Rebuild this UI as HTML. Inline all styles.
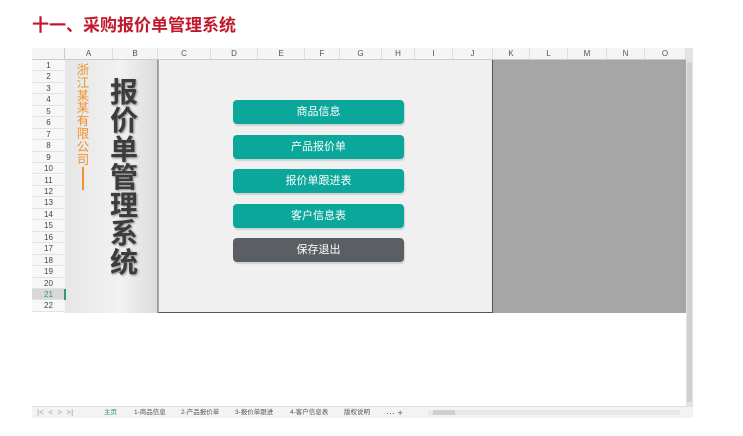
<!DOCTYPE html>
<html><head><meta charset="utf-8"><style>
*{margin:0;padding:0;box-sizing:border-box}
body{width:743px;height:436px;background:#fff;position:relative;overflow:hidden;font-family:"Liberation Sans","Noto Sans CJK SC",sans-serif}
.a{position:absolute}
h1{position:absolute;left:32px;top:11px;font-size:17px;color:#c0182c;font-weight:bold;font-family:"Liberation Sans","Noto Sans CJK SC",sans-serif}
.ch{position:absolute;top:48px;height:12px;font-size:8px;color:#555;text-align:center;line-height:12px;border-right:1px solid #ddd;background:#f5f5f5}
.rh{position:absolute;left:32px;width:33px;height:11.45px;font-size:8px;color:#444;text-align:center;line-height:11px;border-bottom:1px solid #e2e2e2;background:#f7f7f7}
.btn{position:absolute;left:233px;width:171px;height:24px;border-radius:4px;background:#0aa79a;color:#fff;font-size:11px;text-align:center;line-height:24px;box-shadow:1px 2px 1px #c9d6d4}
.tab{position:absolute;top:408px;font-size:6.5px;color:#555;line-height:10px}
</style></head><body>
<h1>十一、采购报价单管理系统</h1>
<div class="a" style="left:32px;top:48px;width:661px;height:370px;background:#fff"></div>
<div class="ch" style="left:32px;width:33px;border-right:1px solid #ccc"></div>
<div class="ch" style="left:65px;width:48px">A</div>
<div class="ch" style="left:113px;width:45px">B</div>
<div class="ch" style="left:158px;width:53px">C</div>
<div class="ch" style="left:211px;width:47px">D</div>
<div class="ch" style="left:258px;width:47px">E</div>
<div class="ch" style="left:305px;width:35px">F</div>
<div class="ch" style="left:340px;width:42px">G</div>
<div class="ch" style="left:382px;width:33px">H</div>
<div class="ch" style="left:415px;width:38px">I</div>
<div class="ch" style="left:453px;width:40px">J</div>
<div class="ch" style="left:493px;width:37px">K</div>
<div class="ch" style="left:530px;width:38px">L</div>
<div class="ch" style="left:568px;width:39px">M</div>
<div class="ch" style="left:607px;width:38px">N</div>
<div class="ch" style="left:645px;width:41px">O</div>
<div class="a" style="left:32px;top:59px;width:654px;height:1px;background:#ccc"></div>
<div class="rh" style="top:60px">1</div><div class="rh" style="top:71.45px">2</div><div class="rh" style="top:82.9px">3</div><div class="rh" style="top:94.35px">4</div><div class="rh" style="top:105.8px">5</div><div class="rh" style="top:117.25px">6</div><div class="rh" style="top:128.7px">7</div><div class="rh" style="top:140.15px">8</div><div class="rh" style="top:151.6px">9</div><div class="rh" style="top:163.05px">10</div><div class="rh" style="top:174.5px">11</div><div class="rh" style="top:185.95px">12</div><div class="rh" style="top:197.4px">13</div><div class="rh" style="top:208.85px">14</div><div class="rh" style="top:220.3px">15</div><div class="rh" style="top:231.75px">16</div><div class="rh" style="top:243.2px">17</div><div class="rh" style="top:254.65px">18</div><div class="rh" style="top:266.1px">19</div><div class="rh" style="top:277.55px">20</div><div class="rh" style="top:289px;background:#d8d8d8;color:#2a9d6a">21</div><div class="rh" style="top:300.45px">22</div>
<div class="a" style="left:65px;top:60px;width:93px;height:253px;background:linear-gradient(90deg,#e6e6e6,#f2f2f2 60%,#dcdcdc);border-right:1px solid #999"></div>
<div class="a" style="left:64px;top:289px;width:2px;height:11px;background:#2a9d6a"></div>
<div class="a" style="left:158px;top:60px;width:335px;height:253px;background:#f0f0f0;border:1px solid #555;border-top:none;border-left:1px solid #aaa"></div>
<div class="a" style="left:493px;top:60px;width:193px;height:253px;background:#a6a6a6"></div>
<div class="a" style="left:76px;top:64px;width:14px;font-size:12.5px;line-height:12.8px;color:#f0932b;text-align:center">浙江某某有限公司</div>
<div class="a" style="left:82px;top:167px;width:1.5px;height:23px;background:#f0932b"></div>
<div class="a" style="left:106px;top:79px;width:36px;font-size:28px;line-height:28.3px;color:#3c3c3c;font-weight:bold;text-align:center;text-shadow:1px 1px 2px #888">报价单管理系统</div>
<div class="btn" style="top:100px">商品信息</div>
<div class="btn" style="top:135px">产品报价单</div>
<div class="btn" style="top:169px">报价单跟进表</div>
<div class="btn" style="top:204px">客户信息表</div>
<div class="btn" style="top:238px;background:#5b5e63">保存退出</div>
<div class="a" style="left:686px;top:48px;width:7px;height:359px;background:#e4e4e4"></div>
<div class="a" style="left:687px;top:62px;width:5px;height:340px;background:#d0d0d0;border-radius:2px"></div>
<div class="a" style="left:32px;top:406px;width:661px;height:12px;background:#f3f3f3;border-top:1px solid #e0e0e0"></div>
<div class="tab" style="left:37px;color:#999;font-size:8px">|&lt; &nbsp;&lt; &nbsp;&gt; &nbsp;&gt;|</div>
<div class="tab" style="left:104px;color:#2a9d6a">主页</div>
<div class="tab" style="left:134px">1-商品信息</div>
<div class="tab" style="left:181px">2-产品报价单</div>
<div class="tab" style="left:235px">3-报价单跟进</div>
<div class="tab" style="left:290px">4-客户信息表</div>
<div class="tab" style="left:344px">版权说明</div>
<div class="tab" style="left:386px;font-size:9px">··· +</div>
<div class="a" style="left:428px;top:410px;width:252px;height:5px;background:#e8e8e8"></div>
<div class="a" style="left:433px;top:410px;width:22px;height:5px;background:#cfcfcf"></div>
</body></html>
